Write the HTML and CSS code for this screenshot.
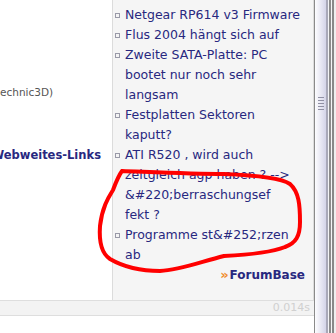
FILE: index.html
```html
<!DOCTYPE html>
<html>
  <head>
    <meta charset="UTF-8" />
    <title>ForumBase</title>
    <link rel="stylesheet" href="styles.css">
  </head>
  <body>
    <div class="window">
      <div class="page">
        <div class="top">
          <div class="main">
            <p class="source">echnic3D)</p>
            <div class="links-row">
              <h3 class="links-title">Webweites-Links</h3>
            </div>
          </div>
          <div class="side">
            <ul class="threads">
              <li>Netgear RP614 v3 Firmware</li>
              <li>Flus 2004 hängt sich auf</li>
              <li>Zweite SATA-Platte: PC bootet nur noch sehr langsam</li>
              <li>Festplatten Sektoren kaputt?</li>
              <li>ATI R520 , wird auch zeitgleich agp haben ? --&gt; &amp;#220;berraschungsef<br>fekt ?</li>
              <li>Programme st&amp;#252;rzen ab</li>
            </ul>
            <div class="brand"><span class="brand-icon">»</span>ForumBase</div>
          </div>
        </div>
        <div class="foot">0.014s</div>
      </div>
      <div class="scrollbar"><div class="grip"></div></div>
    </div>

    <!-- hand drawn marker circle -->
    <svg class="marker" width="336" height="333" viewBox="0 0 336 333">
      <path d="M122,171 C150,172 190,174 224,174 C250,175 280,177 290,184 C299,192 300,205 300,222 C300,236 296,243 285,247 C270,253 245,255 224,256 C200,262 180,270 160,271 C140,271 122,266 110,259 C101,253 99,240 100,226 C102,208 108,198 113,190 C116,182 119,175 122,171" fill="none" stroke="#f00" stroke-width="4" stroke-linecap="round" stroke-linejoin="round"/>
    </svg>
  </body>
</html>
```

FILE: styles.css
```css
body {
  margin: 0;
  font-family: "DejaVu Sans", Verdana, sans-serif;
  background-color: white;
}

.window {
  display: flex;
  height: 333px;
  overflow: hidden;
}

.page {
  flex: 1;
  display: flex;
  flex-direction: column;
}

.top {
  display: flex;
  height: 300px;
}

.main {
  width: 112px;
  flex-shrink: 0;
  border-right: 1px solid #dcdcdc;
  overflow: hidden;
}

.source {
  margin: 82px 0 0 0;
  font-size: 10.5px;
  line-height: 20px;
  color: #555;
  white-space: nowrap;
}

.links-row {
  display: flex;
  justify-content: flex-end;
  padding-right: 11px;
  margin-top: 43px;
}

.links-title {
  margin: 0;
  flex-shrink: 0;
  font-size: 11.5px;
  line-height: 20px;
  color: #28287f;
  white-space: nowrap;
}

.side {
  flex: 1;
  background-color: #f5f5f5;
  border-right: 1px solid #dcdcdc;
  padding: 5px 10px 0 12px;
}

.threads {
  list-style: none;
  margin: 0;
  padding: 0;
  font-size: 12.5px;
  line-height: 20px;
  color: #28287f;
}

.threads li {
  position: relative;
}

.threads li::before {
  content: "";
  position: absolute;
  left: -10px;
  top: 8px;
  width: 3px;
  height: 3px;
  border: 1px solid #9a9aa8;
}

.brand {
  text-align: right;
  margin-right: -2px;
  font-size: 12px;
  line-height: 20px;
  font-weight: bold;
  color: #28287f;
}

.brand-icon {
  color: #f08c2c;
  font-size: 13px;
  margin-right: 1px;
}

.foot {
  height: 14px;
  border-top: 1px solid #dedede;
  border-bottom: 1px solid #dedede;
  background-color: #f3f3f3;
  text-align: right;
  padding-right: 4px;
  font-size: 11px;
  line-height: 14px;
  color: #d0d0d0;
}

.scrollbar {
  width: 22px;
  position: relative;
  background: linear-gradient(to right,
    #8a8a8a 0 1px,
    #fdfdff 1px,
    #d4d4e8 12px,
    #a8a8b8 12px 14px,
    #f4f4f6 14px 15px,
    #8c8c8c 15px 17px,
    #f4f4f6 17px 18px,
    #888 18px 20px,
    #eeeeee 20px);
}

.grip {
  position: absolute;
  left: 4px;
  top: 97px;
  width: 6px;
  height: 13px;
  background: repeating-linear-gradient(to bottom, #9090a4 0 1px, transparent 1px 3px);
}

.marker {
  position: absolute;
  top: 0;
  left: 0;
  pointer-events: none;
}
```
